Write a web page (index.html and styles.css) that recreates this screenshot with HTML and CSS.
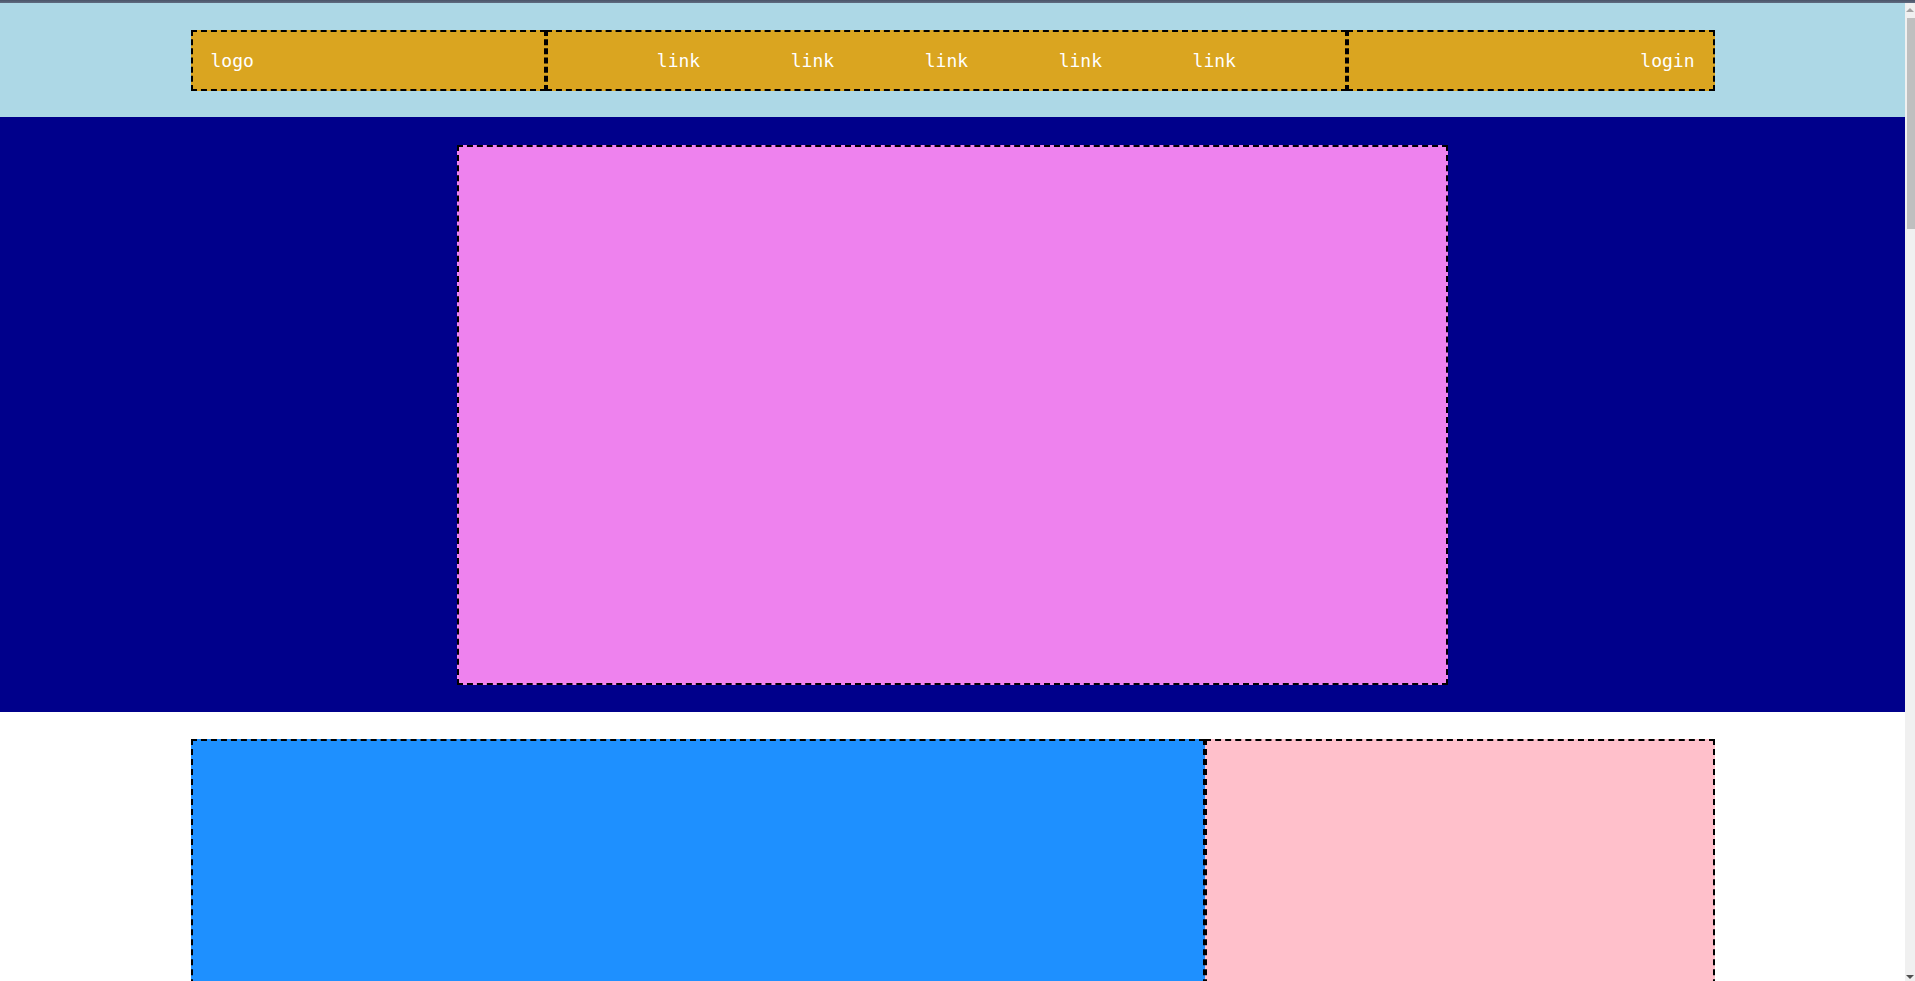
FILE: index.html
```html
<!DOCTYPE html>
<html lang="en">
<head>
<meta charset="utf-8">
<title>Layout</title>
<link rel="stylesheet" href="styles.css">
</head>
<body>
<div class="chrome"></div>
<div class="page">
  <header class="header">
    <nav class="nav">
      <div class="nav-cell logo">logo</div>
      <div class="nav-cell links">
        <a class="link" href="#">link</a>
        <a class="link" href="#">link</a>
        <a class="link" href="#">link</a>
        <a class="link" href="#">link</a>
        <a class="link" href="#">link</a>
      </div>
      <div class="nav-cell login">login</div>
    </nav>
  </header>
  <section class="hero">
    <div class="hero-box"></div>
  </section>
  <main class="content">
    <div class="primary"></div>
    <aside class="aside"></aside>
  </main>
</div>
<div class="scrollbar">
  <div class="arrow arrow-up"></div>
  <div class="thumb"></div>
  <div class="arrow arrow-down"></div>
</div>
</body>
</html>
```
FILE: styles.css
```css
html, body {
  margin: 0;
  padding: 0;
}
body {
  background: #ffffff;
  font-family: "DejaVu Sans Mono", monospace;
  font-size: 18px;
  color: #ffffff;
}
.chrome {
  height: 3px;
  background: linear-gradient(#4a5468, #5f6b80);
}
.page {
  margin-right: 10px;
}
.header {
  background: #add8e6;
  padding: 27px 0 26px;
}
.nav {
  width: 80%;
  margin: 0 auto;
  display: grid;
  grid-template-columns: 23.3% 52.6% 1fr;
  height: 61px;
}
.nav-cell {
  background: #daa520;
  border: 2px dashed #000000;
  box-sizing: border-box;
  display: flex;
  align-items: center;
  padding: 0 18px;
  min-width: 0;
}
.links {
  justify-content: center;
  gap: 90.6px;
  padding: 0;
}
.link {
  color: #ffffff;
  text-decoration: none;
}
.login {
  justify-content: flex-end;
}
.hero {
  background: #00008b;
  padding: 28px 0 27px;
}
.hero-box {
  width: 52%;
  height: 540px;
  margin: 0 auto;
  background: #ee82ee;
  border: 2px dashed #000000;
  box-sizing: border-box;
}
.content {
  width: 80%;
  margin: 27px auto 27px;
  display: grid;
  grid-template-columns: 66.55% 1fr;
  height: 3640px;
}
.primary {
  background: #1e90ff;
  border: 2px dashed #000000;
  box-sizing: border-box;
}
.aside {
  background: #ffc0cb;
  border: 2px dashed #000000;
  box-sizing: border-box;
}
.scrollbar {
  position: fixed;
  top: 3px;
  right: 0;
  bottom: 0;
  width: 10px;
  background: #f0f0f0;
  display: flex;
  flex-direction: column;
  align-items: flex-end;
}
.arrow {
  width: 0;
  height: 0;
  border-left: 4px solid transparent;
  border-right: 4px solid transparent;
  margin: 5px 1px 0 0;
}
.arrow-up {
  border-bottom: 4px solid #a3a3a3;
}
.arrow-down {
  margin-top: auto;
  margin-bottom: 2px;
  border-top: 4px solid #505050;
}
.thumb {
  width: 8px;
  height: 211px;
  margin-top: 6px;
  background: #bfbfbf;
}
```
